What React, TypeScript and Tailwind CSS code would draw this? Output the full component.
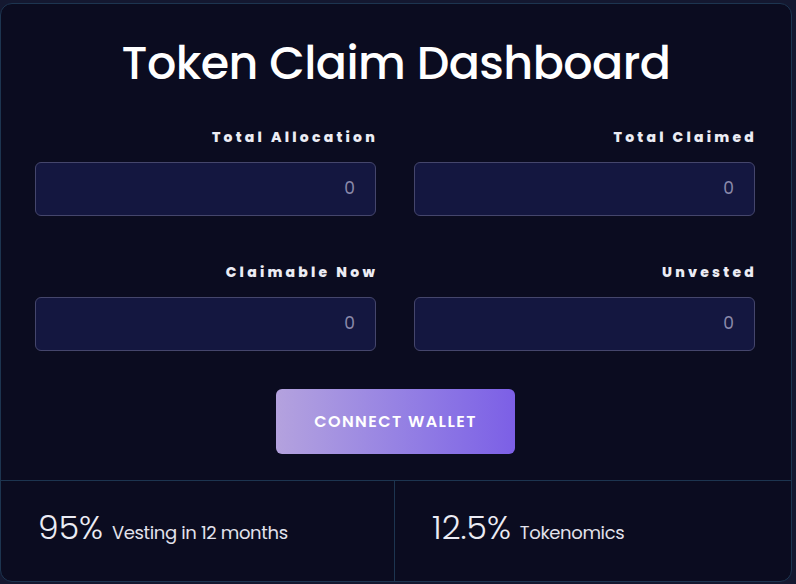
import React from 'react';

const fields = [
  { label: 'Total Allocation', value: '0' },
  { label: 'Total Claimed', value: '0' },
  { label: 'Claimable Now', value: '0' },
  { label: 'Unvested', value: '0' },
];

const stats = [
  { big: '95%', small: 'Vesting in 12 months' },
  { big: '12.5%', small: 'Tokenomics' },
];

const Field: React.FC<{ label: string; value: string }> = ({ label, value }) => (
  <div className="flex flex-col items-end">
    <label className="text-[14px] font-extrabold tracking-[0.23em] text-[#ececf4] leading-[20px] -mr-[2px]">{label}</label>
    <div className="mt-[15px] w-full h-[54px] rounded-[6px] bg-[#141740] border border-[#45466c] flex items-center justify-end pr-[20px]">
      <span className="text-[17px] text-[#8a8aab]">{value}</span>
    </div>
  </div>
);

export default function App() {
  return (
    <div className="w-[796px] h-[584px] bg-[#141830] pt-[3px] overflow-hidden" style={{ fontFamily: '"Poppins", "Inter", "Noto Sans", sans-serif' }}>
      <div className="w-[792px] h-[579px] bg-[#0b0c20] border border-[#1d3550] rounded-[12px] flex flex-col">
        <h1 className="text-center text-white text-[46px] font-medium leading-[56px] mt-[31px] tracking-[-0.012em]">
          Token Claim Dashboard
        </h1>
        <div className="grid grid-cols-2 gap-x-[38px] gap-y-[46px] pl-[34px] pr-[36px] mt-[36px]">
          {fields.map(f => (
            <Field key={f.label} label={f.label} value={f.value} />
          ))}
        </div>
        <div className="flex justify-center mt-[38px] pr-[1px]">
          <button className="w-[239px] h-[65px] rounded-[6px] bg-gradient-to-r from-[#b4a2de] to-[#7c5fe6] text-white font-semibold text-[16px] tracking-[0.09em]">
            CONNECT WALLET
          </button>
        </div>
        <div className="mt-auto h-[101px] border-t border-[#1d3550] grid grid-cols-[394px_1fr]">
          {stats.map((s, i) => (
            <div key={s.big} className={`flex items-baseline pt-[25px] ${i === 0 ? 'pl-[37px] border-r border-[#1d3550]' : 'pl-[37px]'}`}>
              <span className="text-[33px] font-light text-[#ececf4] leading-[44px]">{s.big}</span>
              <span className="ml-[9px] text-[18px] text-[#e2e2ec] tracking-[-0.02em]">{s.small}</span>
            </div>
          ))}
        </div>
      </div>
    </div>
  );
}
